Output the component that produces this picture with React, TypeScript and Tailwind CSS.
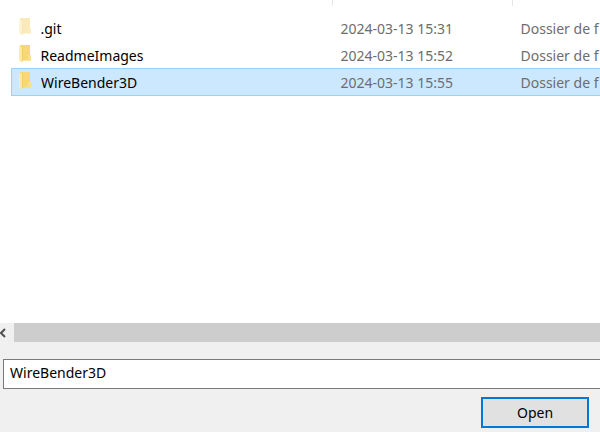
type Entry = { name: string; modified: string; kind: string; faded?: boolean; selected?: boolean };

const entries: Entry[] = [
  { name: ".git", modified: "2024-03-13 15:31", kind: "Dossier de f", faded: true },
  { name: "ReadmeImages", modified: "2024-03-13 15:52", kind: "Dossier de f" },
  { name: "WireBender3D", modified: "2024-03-13 15:55", kind: "Dossier de f", selected: true },
];

function FolderIcon({ faded }: { faded?: boolean }) {
  return (
    <svg width="14" height="18" viewBox="0 0 14 18" className={faded ? "mb-[3px] opacity-50" : "mb-[3px]"} aria-hidden="true">
      <path d="M1 0h10v10h1v5.500H2z" fill="#f8d775" />
      <path d="M9 10h3v5.500H9z" fill="#fbdf8b" />
      <path d="M0 1l3 1.500V17.500L0 15.500z" fill="#fee9a6" />
      <path d="M3 2.500l1-.5v13.500l-1 2z" fill="#f0cb6c" />
    </svg>
  );
}

function FileRow({ entry }: { entry: Entry }) {
  return (
    <tr
      aria-selected={entry.selected}
      className={
        entry.selected ? "h-[27px] border border-[#99d1ff] bg-[#cce8ff]" : "h-[27px] border-t border-transparent"
      }
    >
      <td className="p-0 pt-[2px]">
        <div className="flex items-center gap-2 pl-[7px] text-black">
          <FolderIcon faded={entry.faded} />
          {entry.name}
        </div>
      </td>
      <td className="p-0 pt-[2px] pl-2">{entry.modified}</td>
      <td className="p-0 pt-[2px] pl-2">{entry.kind}</td>
    </tr>
  );
}

export default function App() {
  return (
    <div className="flex min-h-screen flex-col overflow-hidden bg-[#f0f0f0] font-['Noto_Sans',sans-serif] text-[14px] leading-5 text-black">
      <main className="h-[323px] overflow-hidden bg-white pl-[11px]">
        <table className="-mr-1 w-[calc(100%+4px)] table-fixed border-collapse whitespace-nowrap text-[#6d6d6d]">
          <thead>
            <tr className="h-[14px] align-top">
              <th className="w-[321px] p-0"><div className="h-[6px] border-r border-[#e5e5e5]" /></th>
              <th className="w-[180px] p-0"><div className="h-[6px] border-r border-[#e5e5e5]" /></th>
              <th className="p-0" />
            </tr>
          </thead>
          <tbody>
            {entries.map((entry) => (
              <FileRow key={entry.name} entry={entry} />
            ))}
          </tbody>
        </table>
      </main>
      <div className="flex h-[19px]">
        <button type="button" aria-label="Scroll left" className="flex w-[14px] items-center">
          <svg width="7" height="10" viewBox="0 0 7 10" fill="none" stroke="#505050" strokeWidth="2" aria-hidden="true">
            <path d="M5 1L1 5l4 4" />
          </svg>
        </button>
        <div className="grow bg-[#cdcdcd]" />
      </div>
      <form className="flex flex-col gap-2 pt-[17px] pl-[3px]" onSubmit={(e) => e.preventDefault()}>
        <input
          aria-label="Folder"
          defaultValue="WireBender3D"
          className="h-[30px] w-full border border-r-0 border-[#7a7a7a] bg-white px-[6px] pb-[3px] outline-none"
        />
        <button type="submit" className="mr-[11px] h-[31px] w-[108px] self-end border-2 border-[#0078d7] bg-[#e1e1e1]">
          Open
        </button>
      </form>
    </div>
  );
}
